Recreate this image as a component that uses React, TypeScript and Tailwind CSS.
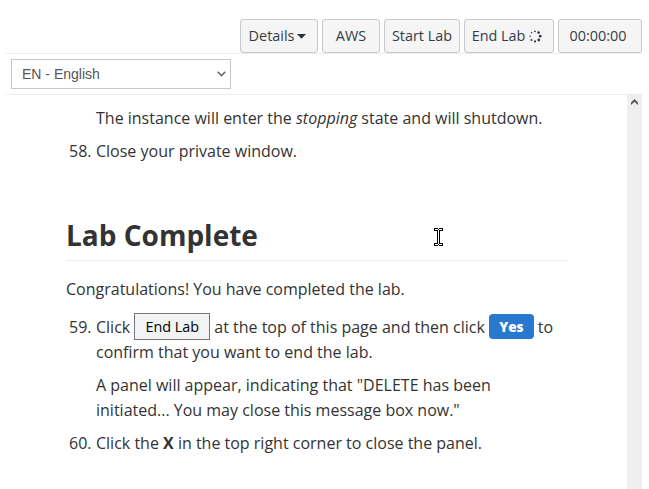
import React from "react";

const btn =
  "flex h-[34px] shrink-0 items-center justify-center whitespace-nowrap rounded-[3px] border border-[#c5cacd] bg-[#f5f5f5] text-[14.4px] text-[#333d47]";

function Spinner() {
  const dots = [
    [6, 1.3, 0.9], [9.6, 2.6, 1.3], [11.2, 6.2, 1.4], [9.8, 10, 1.4],
    [6, 11.4, 1.1], [2.5, 10, 1], [1.1, 6.2, 0.8], [2.6, 2.6, 0.8],
  ];
  return (
    <svg width="13" height="13" viewBox="0 0 13 13" className="ml-[4px]" fill="#333d47">
      {dots.map(([cx, cy, r], i) => (
        <circle key={i} cx={cx} cy={cy} r={r} />
      ))}
    </svg>
  );
}

function Step({ n, children }: { n?: string; children: React.ReactNode }) {
  return (
    <div className="flex">
      <div className="w-[30px] shrink-0 whitespace-nowrap pl-[3px]">{n}</div>
      <div className="whitespace-nowrap">{children}</div>
    </div>
  );
}

export default function App() {
  return (
    <div className="h-[489px] w-[649px] overflow-hidden bg-white pl-[6px] font-['Open_Sans','Noto_Sans',sans-serif]">
      <div className="flex h-[489px] w-[636px] flex-col">
        <header className="flex h-[54px] shrink-0 items-start justify-end gap-[4px] border-b border-[#eee] pt-[19px]">
          <button className={`${btn} w-[78px] pr-[3px]`}>
            Details
            <svg width="9" height="5" viewBox="0 0 8 5" preserveAspectRatio="none" className="ml-[3px]">
              <path d="M0 0h8L4 4.7z" fill="#263644" />
            </svg>
          </button>
          <button className={`${btn} w-[58px]`}>AWS</button>
          <button className={`${btn} w-[76px]`}>Start Lab</button>
          <button className={`${btn} w-[90px] pr-[4px]`}>
            End Lab
            <Spinner />
          </button>
          <button className={`${btn} w-[84px] pr-[4px]`}>00:00:00</button>
        </header>
        <div className="h-[41px] shrink-0 border-b border-[#eee] pl-[5px] pt-[5px]">
          <div className="flex h-[30px] w-[220px] items-center justify-between border border-[#c8c8c8] pl-[10px] pr-[4px] font-['Liberation_Sans',sans-serif] text-[14px] text-[#555]">
            <span>EN - English</span>
            <svg width="9" height="6" viewBox="0 0 9 6" fill="none" stroke="#666" strokeWidth="1.5">
              <path d="M.7.8l3.8 3.8L8.3.8" />
            </svg>
          </div>
        </div>
        <div className="flex min-h-0 flex-1">
          <main className="w-[621px] pl-[60px] pr-[60px] pt-[11px] text-[16px] leading-[25px] text-[#333]">
            <Step>The instance will enter the <em>stopping</em> state and will shutdown.</Step>
            <div className="mt-[8px]"><Step n="58.">Close your private window.</Step></div>
            <h2 className="relative mt-[52px] h-[45px] border-b border-[#eee] text-[28px] font-bold leading-[39px] text-[#333]">
              Lab Complete
              <svg className="absolute left-[368px] top-[12px]" width="9" height="18" viewBox="0 0 9 18" shapeRendering="crispEdges">
                <path d="M0 0h4v1h1V0h4v3H6v12h3v3H5v-1H4v1H0v-3h3V3H0z" fill="#000" />
                <path d="M1 1h3v1h1V1h3v1H5v14h3v1H5v-1H4v1H1v-1h3V2H1z" fill="#fff" />
              </svg>
            </h2>
            <p className="mt-[16px]">Congratulations! You have completed the lab.</p>
            <div className="mt-[13px]">
              <Step n="59.">
                <div className="flex h-[25px] items-center">
                  <span>Click</span>
                  <span className="-mt-[2px] ml-[4px] flex h-[27px] w-[76px] shrink-0 items-center justify-center border border-[#777] bg-[#f1f3f5] text-[14.4px] text-black">End Lab</span>
                  <span className="ml-[4px]">at the top of this page and then click</span>
                  <span className="-mt-[2px] ml-[4px] flex h-[25px] w-[45px] shrink-0 items-center justify-center rounded-[4px] bg-[#2878d0] text-[13.6px] font-extrabold text-white">Yes</span>
                  <span className="ml-[4px]">to</span>
                </div>
                <div>confirm that you want to end the lab.</div>
                <p className="mt-[8px]">
                  A panel will appear, indicating that "DELETE has been<br />
                  initiated... You may close this message box now."
                </p>
              </Step>
            </div>
            <div className="mt-[8px]"><Step n="60.">Click the <b>X</b> in the top right corner to close the panel.</Step></div>
          </main>
          <aside className="flex w-[15px] shrink-0 justify-center bg-[#efefef] pt-[4px]">
            <svg width="7" height="6" viewBox="0 0 7 6">
              <path d="M0 3.5L3.5 0 7 3.5V6L3.5 2.7 0 6z" fill="#555" />
            </svg>
          </aside>
        </div>
      </div>
    </div>
  );
}
